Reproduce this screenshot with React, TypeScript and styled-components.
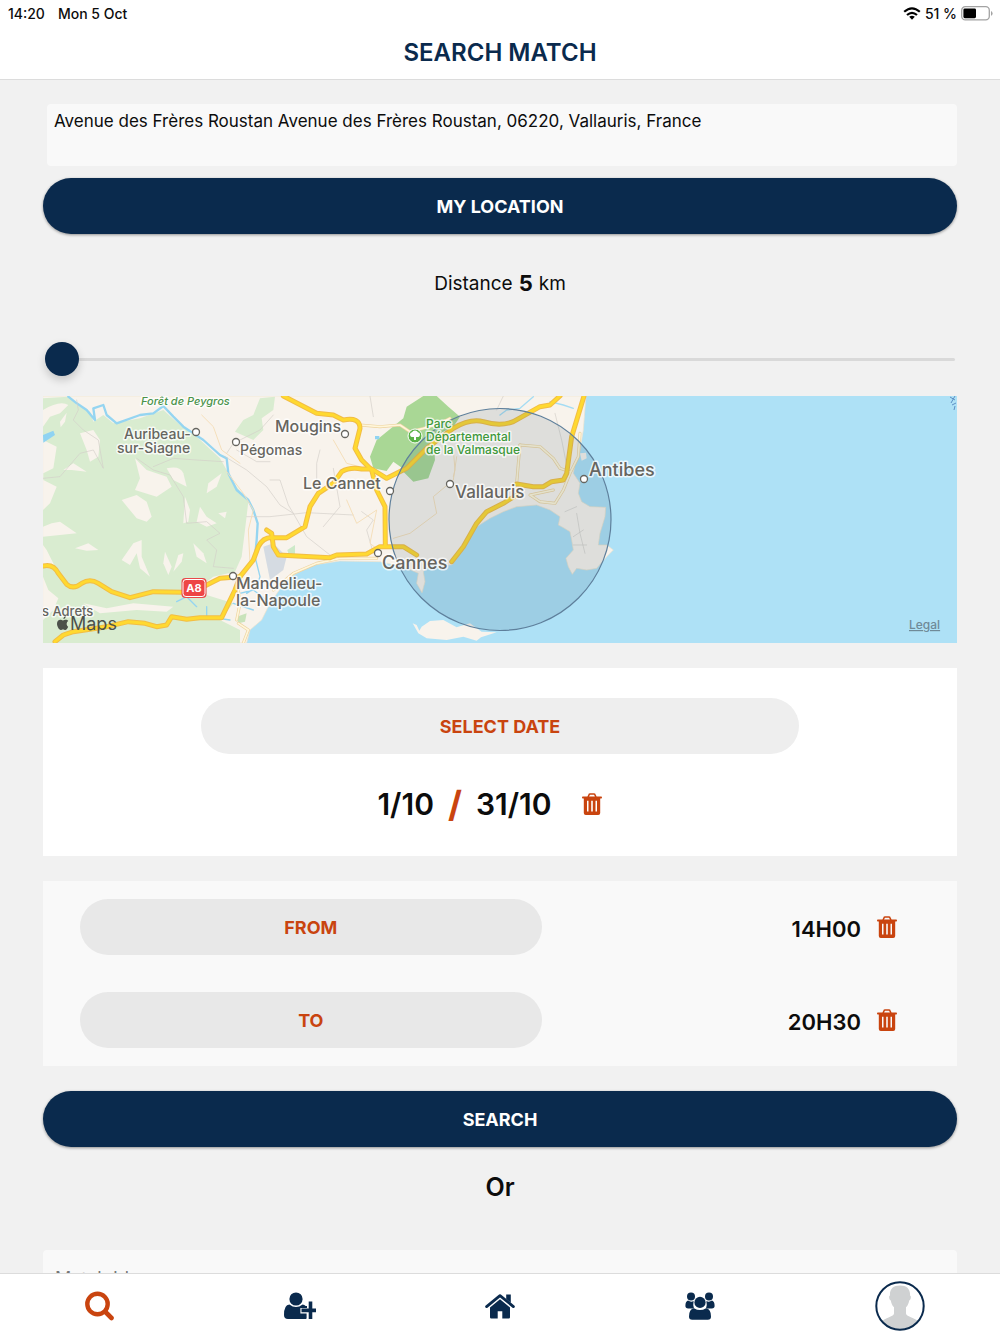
import React, { useState } from "react";
import styled, { createGlobalStyle } from "styled-components";

const navy = "#0a2a4d";
const orange = "#c9440f";
const sans = `Inter, "Liberation Sans", sans-serif`;

const GlobalStyle = createGlobalStyle`
  * { box-sizing: border-box; }
  body { margin: 0; background: #f1f1f1; font-family: ${sans}; color: #0c0c0c; }
  button, input, textarea { font-family: inherit; color: inherit; }
`;

const Screen = styled.div`
  display: flex;
  flex-direction: column;
  height: 100vh;
`;

const StatusBar = styled.div`
  display: flex;
  align-items: center;
  justify-content: space-between;
  height: 26px;
  padding: 0 7px 0 8px;
  background: #fff;
  font-size: 14px;
  font-weight: 500;
`;

const StatusGroup = styled.div<{ $gap: number }>`
  display: flex;
  align-items: center;
  gap: ${(p) => p.$gap}px;
`;

const Header = styled.header`
  display: flex;
  align-items: center;
  justify-content: center;
  height: 54px;
  background: #fff;
  border-bottom: 1px solid #dcdcdc;
`;

const Title = styled.h1`
  margin: 0;
  font-size: 24px;
  font-weight: 600;
  line-height: 30px;
  color: ${navy};
`;

const Main = styled.main`
  flex: 1;
  min-height: 0;
  overflow-y: auto;
  scrollbar-width: none;
  padding: 24px 43px;
`;

const Address = styled.textarea`
  display: block;
  width: calc(100% - 4px);
  height: 62px;
  margin: 0 0 12px 4px;
  padding: 6px 7px;
  border: 0;
  border-radius: 4px;
  background: #f9f9f9;
  font-size: 17px;
  line-height: 22px;
  resize: none;
`;

const PrimaryButton = styled.button`
  display: block;
  width: 100%;
  height: 56px;
  border: 0;
  border-radius: 28px;
  background: ${navy};
  box-shadow: 0 1px 3px rgba(0, 0, 0, 0.4);
  color: #fff;
  font-size: 18px;
  font-weight: 700;
`;

const Distance = styled.label`
  display: flex;
  align-items: center;
  justify-content: center;
  gap: 6px;
  height: 30px;
  margin: 34px 0 44px;
  font-size: 19px;
`;

const DistanceValue = styled.strong`
  font-size: 22px;
  font-weight: 700;
`;

const Slider = styled.input`
  display: block;
  appearance: none;
  width: calc(100% - 4px);
  height: 34px;
  margin: 0 2px 20px;
  background: transparent;

  &::-webkit-slider-runnable-track {
    height: 3px;
    border-radius: 2px;
    background: #d9d9d9;
  }
  &::-webkit-slider-thumb {
    appearance: none;
    width: 34px;
    height: 34px;
    margin-top: -16px;
    border-radius: 50%;
    background: ${navy};
    box-shadow: 0 4px 8px rgba(0, 0, 0, 0.18);
  }
`;

const MapFrame = styled.div`
  height: 247px;
  margin-bottom: 25px;
  overflow: hidden;
  background: #aee1f6;

  svg { display: block; width: 100%; height: 100%; }
`;

const DateCard = styled.section`
  display: flex;
  flex-direction: column;
  align-items: center;
  gap: 30px;
  margin-bottom: 25px;
  padding: 30px 24px 32px;
  background: #fff;
`;

const PillButton = styled.button<{ $width: string; $tone: string }>`
  width: ${(p) => p.$width};
  height: 56px;
  border: 0;
  border-radius: 28px;
  background: ${(p) => p.$tone};
  color: ${orange};
  font-size: 18px;
  font-weight: 700;
`;

const DateRow = styled.div`
  display: flex;
  align-items: center;
  height: 40px;
  font-size: 30px;
  font-weight: 600;
`;

const Slash = styled.span`
  padding: 0 14px;
  color: ${orange};
  font-size: 36px;
  font-weight: 700;
`;

const IconButton = styled.button`
  display: flex;
  padding: 0;
  border: 0;
  background: none;
  color: ${orange};
`;

const DateClear = styled(IconButton)`
  margin: 0 21px 0 30px;
`;

const TimeCard = styled.section`
  display: flex;
  flex-direction: column;
  gap: 37px;
  margin-bottom: 25px;
  padding: 18px 60px 18px 37px;
  background: #f9f9f9;
`;

const TimeRow = styled.div`
  display: flex;
  align-items: center;
  gap: 16px;
`;

const Time = styled.span`
  margin-left: auto;
  padding-top: 4px;
  font-size: 22px;
  font-weight: 600;
  line-height: 28px;
`;

const Or = styled.p`
  margin: 25px 0 48px;
  text-align: center;
  font-size: 25px;
  font-weight: 600;
  line-height: 30px;
`;

const MatchField = styled.input`
  display: block;
  width: 100%;
  height: 56px;
  padding: 0 12px;
  border: 0;
  border-radius: 4px;
  background: #f9f9f9;
  font-size: 18px;

  &::placeholder { color: #777; opacity: 1; }
`;

const TabBar = styled.nav`
  display: grid;
  grid-template-columns: repeat(5, 1fr);
  height: 61px;
  background: #fff;
  border-top: 1px solid #dcdcdc;
`;

const Tab = styled.a<{ $active?: boolean }>`
  display: flex;
  align-items: center;
  justify-content: center;
  padding-top: 4px;
  color: ${(p) => (p.$active ? orange : navy)};
`;

const MapLabel = styled.text<{ $size?: number; $tone?: string; $italic?: boolean }>`
  font-family: ${sans};
  font-size: ${(p) => p.$size ?? 14}px;
  font-weight: 500;
  font-style: ${(p) => (p.$italic ? "italic" : "normal")};
  fill: ${(p) => p.$tone ?? "#66655f"};
  stroke: rgba(255, 255, 255, 0.75);
  stroke-width: 3px;
  stroke-linejoin: round;
  paint-order: stroke;
`;

const Trash = () => (
  <svg width="20" height="22" viewBox="0 0 20 22" aria-hidden="true">
    <path d="M6 4.5 7 1.8Q7.2 1 8.2 1h3.6q1 0 1.2.8l1 2.7" fill="none" stroke="currentColor" strokeWidth="1.6" />
    <path
      fillRule="evenodd"
      fill="currentColor"
      d="M.8 3.600h18.400q.8 0 .8 1t-.8 1h-1V20q0 2-2 2H3.800q-2 0-2-2V5.600h-1Q0 5.600 0 4.600t.8-1zM5 7.800V18.500h1.500V7.800zm4.200 0V18.500h1.600V7.800zm4.300 0V18.500H15V7.800z"
    />
  </svg>
);

const WifiIcon = () => (
  <svg width="18" height="13" viewBox="0 0 18 13" aria-hidden="true">
    <g fill="none" stroke="#000" strokeWidth="2.2">
      <path d="M1.2 4.8Q9-2.2 16.8 4.8" />
      <path d="M4 8Q9 3.6 14 8" />
    </g>
    <path d="M6.2 9.8Q9 7.8 11.8 9.8L9 12.8z" />
  </svg>
);

const BatteryIcon = () => (
  <svg width="32" height="15" viewBox="0 0 32 15" aria-hidden="true">
    <rect x=".7" y=".7" width="27.6" height="13.2" rx="3.6" fill="#fff" stroke="#a3a3a3" strokeWidth="1.3" />
    <rect x="2.4" y="2.4" width="12.6" height="9.8" rx="1.4" />
    <path d="M30 5q1.6.8 1.6 2.4T30 9.8z" fill="#a3a3a3" />
  </svg>
);

const SearchIcon = () => (
  <svg width="30" height="30" viewBox="0 0 30 30" fill="none" stroke="currentColor" aria-hidden="true">
    <circle cx="12.500" cy="13" r="10.200" strokeWidth="4.400" />
    <path d="m20.500 21 6 6" strokeWidth="4.600" strokeLinecap="round" />
  </svg>
);

const AddUserIcon = () => (
  <svg width="32" height="28" viewBox="0 0 32 28" fill="currentColor" aria-hidden="true">
    <circle cx="12" cy="7" r="6.6" />
    <path d="M5.4 12.5Q12 17.500 18.600 12.500q2 .2 3 1.500h1.400v2h-6.600v5.600h6.200v4.900q-.6.500-2 .500H4q-4 0-4-4Q0 12.800 5.400 12.500z" />
    <path d="M24.700 9.400h3.600v7.200H32v3.600h-3.700V27h-3.600v-6.800h-7.200v-3.600h7.200z" />
  </svg>
);

const HomeIcon = () => (
  <svg width="30" height="26" viewBox="0 0 30 26" fill="currentColor" aria-hidden="true">
    <path d="m1.6 13.6 13.4-11 13.4 11" fill="none" stroke="currentColor" strokeWidth="2.8" strokeLinecap="round" strokeLinejoin="round" />
    <path d="M21.2 1.4h4.6v8.4l-4.6-3.8z" />
    <path d="m15 6.3 10 8.2v9.8q0 1.2-1.2 1.2h-6.5v-7.3h-4.6v7.3H6.2Q5 25.500 5 24.300v-9.800z" />
  </svg>
);

const GroupIcon = () => (
  <svg width="30" height="28" viewBox="0 0 30 28" fill="currentColor" aria-hidden="true">
    <circle cx="6" cy="4.400" r="4" />
    <circle cx="24" cy="4.400" r="4" />
    <path d="M3 8.600q3 1.900 5.600.400-.9 4 .4 7.400H3.200Q.4 16.400.4 14q0-4.600 2.600-5.400z" />
    <path d="M27 8.600q-3 1.900-5.600.400.9 4-.4 7.400h5.800q2.800 0 2.800-2.400 0-4.600-2.600-5.400z" />
    <circle cx="15" cy="10.400" r="5.600" />
    <path d="M9 16.200q6 3.800 12 0 5 .6 5 8.400 0 3.200-3.200 3.200H7.200Q4 27.800 4 24.600q0-7.800 5-8.400z" />
  </svg>
);

const Avatar = () => (
  <svg width="50" height="50" viewBox="0 0 50 50" role="img" aria-label="Profile">
    <clipPath id="avatar"><circle cx="25" cy="25" r="23" /></clipPath>
    <g clipPath="url(#avatar)">
      <path
        fill="#cfd1d2"
        d="M25 4.500c7 0 10.500 3.800 10 10 1.500.500 1 4-.8 5-.5 3-1.400 5-3.200 6.800v6.200c0 3 8 4 15 9.500V50H4v-8c7-5.500 15-6.500 15-9.500v-6.200c-1.800-1.800-2.700-3.800-3.200-6.800-1.800-1-2.300-4.500-.8-5-.5-6.200 3-10 10-10z"
      />
    </g>
    <circle cx="25" cy="25" r="23.700" fill="none" stroke={navy} strokeWidth="2" />
  </svg>
);

const forest =
  "M9 25L85 20 110 45 150 65 160 95 190 75 220 100 300 85 370 60 420 105 470 140 540 205 560 240 590 290 625 335 615 420 605 500 585 545 520 560 500 575 500 615 580 640 540 690 600 720 600 759 9 759V690L40 660 55 625 25 600 9 560V530L50 540 20 480 9 465V440L110 430 60 395 35 400 9 410V360L30 340 50 290 10 270V250L40 235 50 170 9 150z";
const clearings = [
  "M9 60Q60 30 85 45L60 70 30 80 9 110z",
  "M60 95L80 68 75 95 62 112z",
  "M120 130L160 120 180 150 175 200 150 215 140 180z",
  "M70 240L100 220 140 245 95 240z",
  "M285 205L320 240 380 260 395 290 350 320 285 300 300 265z",
  "M245 330L290 315 320 335 335 380 320 395 290 385z",
  "M380 235Q420 225 430 250L440 290 400 270z",
  "M435 320L450 360 445 395 430 400z",
  "M480 350L500 380 530 400 500 410 470 395z",
  "M535 370L560 365 555 385z",
  "M105 475L145 460 175 480 140 482z",
  "M245 510L280 460 305 450 305 500 330 560 300 535 290 490 270 525z",
  "M375 485L395 530 385 555 370 520z",
  "M400 545L425 515 430 490 415 495z",
  "M460 460L490 490 500 520 470 500z",
  "M505 280L545 250 530 290 500 310z",
  "M130 640L200 655 280 640 400 650 380 665 290 660 180 670z",
];
const coast =
  "M9 18H1638L1630 120 1620 180 1605 225 1600 250 1620 280 1615 310 1625 335 1650 350 1697 352 1695 380 1680 430 1675 465 1700 465 1720 480 1700 500 1670 535 1640 540 1610 535 1597 553 1585 530 1578 505 1600 480 1595 450 1590 425 1565 410 1555 405 1560 380 1530 360 1490 345 1430 350 1390 365 1350 385 1310 410 1275 470 1235 525 1170 525 1150 545 1155 575 1146 608 1130 580 1135 550 1090 530 1020 515 900 513 820 525 760 555 725 590 690 640 665 690 630 720 620 759H9z";
const minorRoads = [
  "M9 265L60 260 120 190 160 180 190 235 175 150 130 120 100 90 115 60 110 30",
  "M290 205L340 240 390 255 430 320 440 400 500 395 540 430 500 450 530 480 520 530 580 535",
  "M340 230L400 205 470 210 550 215",
  "M555 200L620 240 680 290 720 345 760 370",
  "M620 380L690 380 800 368 940 375",
  "M560 190L580 160 660 120 700 75",
  "M590 180L650 215 690 215",
  "M690 270H720L745 345 760 370 800 440 870 495",
  "M830 290V220L840 180M880 235L900 350 850 410",
  "M965 365L1000 390 980 420 1000 490",
  "M990 18L1000 80M1390 18L1370 60M1545 70L1565 150 1580 225",
  "M1575 365L1610 350M1610 370L1620 430 1635 490M1600 440L1630 420M1600 465H1640",
];
const tracks = [
  "M485 75L520 110 545 180 600 220",
  "M560 245L610 310 640 360 625 420 630 520",
  "M920 330L950 400 1010 360 990 460 1015 480",
  "M1060 445L1110 430 1190 370 1180 320 1240 270 1250 200",
  "M880 150L920 220 960 230",
  "M1240 180L1245 240 1240 260",
];
const secondary = [
  "M960 105L1020 110 1080 105 1110 125 1150 115 1200 100 1230 85",
  "M1440 165L1435 220 1430 280",
  "M1440 165L1500 170 1540 205 1560 235 1590 245",
  "M1620 130L1615 200 1590 250 1570 300 1545 340 1500 335 1470 315 1540 300",
  "M700 600L760 550 830 520 900 505 1010 505",
  "M590 690L600 640 595 600M595 700L625 720 610 759",
];
const highways = [
  "M9 528Q40 520 55 550L80 583Q100 600 125 580 150 565 175 580L215 605 270 623 340 605 430 607 500 585 540 565 600 560 640 510 655 470 Q670 440 700 443H740L795 410 810 350 835 310 880 280 905 245Q930 230 965 237H995L1040 265 1100 235 1160 175 1240 115Q1290 85 1330 95 1380 110 1420 95L1500 50 1530 45 1560 18",
  "M45 755L70 735 100 725 200 710 265 695 315 700 350 710 380 705 395 680 440 688 480 683 545 683 585 600 600 560",
  "M730 18L830 70 880 75 910 90Q960 80 960 115L945 175 965 210 995 240 1010 300 1035 350 1036 465",
  "M680 420L695 430 700 470 715 495 870 503 890 495 980 492 1020 470H1090L1130 495",
  "M1235 515L1270 470 1310 400 1340 365 1390 340 1430 315",
  "M1632 18L1595 140 1580 250 1570 270 1535 275 1510 290 1480 290 1430 282",
];

const Town = ({ x, y }: { x: number; y: number }) => (
  <circle cx={x} cy={y} r="3.500" fill="#fff" stroke="#66655f" strokeWidth="1.300" />
);

const RegionMap = () => (
  <svg viewBox="0 0 914 247" preserveAspectRatio="xMidYMid slice" role="img" aria-label="Map of the Cannes and Antibes area">
    <rect x="-600" width="2114" height="247" fill="#aee1f6" />
    <g transform="translate(-3 -6) scale(0.33333)" strokeLinejoin="round" strokeLinecap="round">
      <path d={coast} fill="#f8f3ec" stroke="#efe3cc" strokeWidth="2" />
      <path d="M1118 700L1130 705 1138 722 1145 710 1170 693 1210 690 1250 712 1290 700 1325 725 1370 727 1323 742 1310 752 1270 740 1220 750 1160 745 1135 730z" fill="#f8f3ec" />
      <path d={forest} fill="#d9ecd0" />
      <path d="M585 125L610 90 640 75 660 25 705 20 700 60 665 85 670 120 640 150z" fill="#d9ecd0" />
      {clearings.map((d) => <path key={d} d={d} fill="#f8f3ec" />)}
      <path d="M670 470L700 460 740 500 730 540 690 570z" fill="#d5dbe2" />
      <path d="M742 480L765 465V495L745 490z" fill="#cde9c8" />
      <path d="M590 680L620 670 615 695 595 700z" fill="#c9e3bb" />
      <path d="M990 200L1010 150 1090 85 1100 50 1150 18H1190L1225 50 1260 80 1240 110 1180 140 1185 210 1165 265 1120 275 1090 245 1050 245 1000 235z" fill="#a9d795" />
      <path d="M1035 250L1060 215 1095 240 1060 270z" fill="#f8f3ec" />
      <path d="M1005 138h13v10h-13zM9 135L40 122 45 135 10 158z" fill="#8fd3f2" />
      <path d="M1600 225L1640 180 1660 210 1640 240 1615 245z" fill="#aee1f6" />
      <path d="M1620 190L1638 188 1640 205 1625 212z" fill="#f8f3ec" />
      <g fill="none">
        <path d="M85 20L110 40 140 60 165 90 160 55 190 45 200 75 230 100 300 75 340 70 370 48 400 80 430 110 490 150 540 195 560 205 565 250 590 300 625 330 640 360 653 400 650 450 645 500" stroke="#95d5f1" strokeWidth="7" />
        <path d="M645 500L660 560 650 590 620 610M600 610L640 600 680 630M580 640L640 660M500 650V680L570 690M410 635L440 620 470 650" stroke="#95d5f1" strokeWidth="4" />
        <path d="M1380 75L1400 60 1440 55 1480 20M1530 35L1570 45 1600 55" stroke="#a5dcf3" strokeWidth="4" />
        {minorRoads.map((d) => <path key={d} d={d} stroke="#d3cfc8" strokeWidth="2" />)}
        {tracks.map((d) => <path key={d} d={d} stroke="#f5dfbb" strokeWidth="3" />)}
        {secondary.map((d) => <path key={d} d={d} stroke="#edd3a0" strokeWidth="9" />)}
        {secondary.map((d) => <path key={d} d={d} stroke="#fff6da" strokeWidth="5" />)}
        {highways.map((d) => <path key={d} d={d} stroke="#f2bd45" strokeWidth="15" />)}
        {highways.map((d) => <path key={d} d={d} stroke="#ffd930" strokeWidth="9" />)}
      </g>
    </g>
    <circle cx="372" cy="40" r="7" fill="#5bb347" stroke="#fff" strokeWidth="1" />
    <path d="M371 44v-3q-4 .5-4-2.500 0-2 2-2.300.8-1.800 3-1.800t3 1.800q2 .3 2 2.300 0 3-4 2.500v3z" fill="#fff" />
    <circle cx="457" cy="123.500" r="111" fill="rgba(45,85,110,.13)" stroke="#5e7f9b" strokeWidth="1.200" />

    <MapLabel $size={11} $tone="#4a934a" $italic x="98" y="9">Forêt de Peygros</MapLabel>
    <MapLabel $size={14} x="81" y="43">Auribeau-</MapLabel>
    <MapLabel $size={14} x="74" y="57">sur-Siagne</MapLabel>
    <MapLabel $size={14} x="197" y="59">Pégomas</MapLabel>
    <MapLabel $size={16} x="232" y="36">Mougins</MapLabel>
    <MapLabel $size={16} x="260" y="93">Le Cannet</MapLabel>
    <MapLabel $size={17} x="412" y="102">Vallauris</MapLabel>
    <MapLabel $size={18} x="546" y="80">Antibes</MapLabel>
    <MapLabel $size={18} x="339" y="173">Cannes</MapLabel>
    <MapLabel $size={16} x="193" y="193">Mandelieu-</MapLabel>
    <MapLabel $size={16} x="193" y="210">la-Napoule</MapLabel>
    <MapLabel $size={12} $tone="#3f993b" x="383" y="32">Parc</MapLabel>
    <MapLabel $size={12} $tone="#3f993b" x="383" y="45">Départemental</MapLabel>
    <MapLabel $size={12} $tone="#3f993b" x="383" y="58">de la Valmasque</MapLabel>
    <MapLabel $size={13} x="-1" y="220">s Adrets</MapLabel>
    <Town x={153} y={36} />
    <Town x={193} y={46} />
    <Town x={302} y={38} />
    <Town x={347} y={95} />
    <Town x={407} y={88} />
    <Town x={541} y={83} />
    <Town x={335} y={157} />
    <Town x={190} y={180} />
    <rect x="138.500" y="182" width="25" height="20" rx="4" fill="#e84a4a" />
    <rect x="140" y="183.500" width="22" height="17" rx="3" fill="#ee4545" stroke="#fff" />
    <text x="151" y="196" textAnchor="middle" fontFamily="Inter, sans-serif" fontSize="11" fontWeight="700" fill="#fff">A8</text>
    <g fill="#4c514a">
      <path d="M20.500 223c1-.1 2.300-1.100 2.200-2.800-1.500.1-2.400 1.400-2.200 2.800zM25.200 230.700c-.8 2-1.700 3.200-2.900 3.200-.9 0-1.300-.5-2.300-.5s-1.400.5-2.300.5c-1.700 0-3.700-3.400-3.700-6.100 0-2.600 1.600-4 3.200-4 1.100 0 1.900.6 2.700.6.900 0 1.700-.7 3-.7 1 0 1.900.5 2.400 1.300-2.300 1.400-2 4.700-.1 5.700z" />
      <text x="27" y="234" fontFamily="Inter, sans-serif" fontSize="18">Maps</text>
    </g>
    <text x="866" y="233" fontFamily="Inter, sans-serif" fontSize="12" fontWeight="500" fill="#6f8a98" textDecoration="underline">Legal</text>
    <path d="M907 1l5 3M912 0l-4 7M909 9l4-2M912 10l-1 4" fill="none" stroke="#5d8fc4" />
  </svg>
);

export default function App() {
  const [distance, setDistance] = useState(5);
  return (
    <Screen>
      <GlobalStyle />
      <StatusBar>
        <StatusGroup $gap={13}>
          <span>14:20</span>
          <span>Mon 5 Oct</span>
        </StatusGroup>
        <StatusGroup $gap={4}>
          <WifiIcon />
          <span>51 %</span>
          <BatteryIcon />
        </StatusGroup>
      </StatusBar>
      <Header>
        <Title>SEARCH MATCH</Title>
      </Header>
      <Main>
        <Address
          aria-label="Address"
          defaultValue="Avenue des Frères Roustan Avenue des Frères Roustan, 06220, Vallauris, France"
        />
        <PrimaryButton type="button">MY LOCATION</PrimaryButton>
        <Distance htmlFor="distance">
          Distance <DistanceValue>{distance}</DistanceValue> km
        </Distance>
        <Slider
          id="distance"
          type="range"
          min={5}
          max={100}
          value={distance}
          onChange={(e) => setDistance(Number(e.target.value))}
        />
        <MapFrame>
          <RegionMap />
        </MapFrame>
        <DateCard>
          <PillButton type="button" $width="69%" $tone="#eeeeee">SELECT DATE</PillButton>
          <DateRow>
            <span>1/10</span>
            <Slash>/</Slash>
            <span>31/10</span>
            <DateClear type="button" aria-label="Clear dates"><Trash /></DateClear>
          </DateRow>
        </DateCard>
        <TimeCard>
          <TimeRow>
            <PillButton type="button" $width="56.5%" $tone="#e8e8e8">FROM</PillButton>
            <Time>14H00</Time>
            <IconButton type="button" aria-label="Clear start time"><Trash /></IconButton>
          </TimeRow>
          <TimeRow>
            <PillButton type="button" $width="56.5%" $tone="#e8e8e8">TO</PillButton>
            <Time>20H30</Time>
            <IconButton type="button" aria-label="Clear end time"><Trash /></IconButton>
          </TimeRow>
        </TimeCard>
        <PrimaryButton type="button">SEARCH</PrimaryButton>
        <Or>Or</Or>
        <MatchField aria-label="Match Id" placeholder="Match Id" />
      </Main>
      <TabBar>
        <Tab href="#search" $active aria-label="Search"><SearchIcon /></Tab>
        <Tab href="#invite" aria-label="Add player"><AddUserIcon /></Tab>
        <Tab href="#home" aria-label="Home"><HomeIcon /></Tab>
        <Tab href="#groups" aria-label="Groups"><GroupIcon /></Tab>
        <Tab href="#profile" aria-label="Profile"><Avatar /></Tab>
      </TabBar>
    </Screen>
  );
}
